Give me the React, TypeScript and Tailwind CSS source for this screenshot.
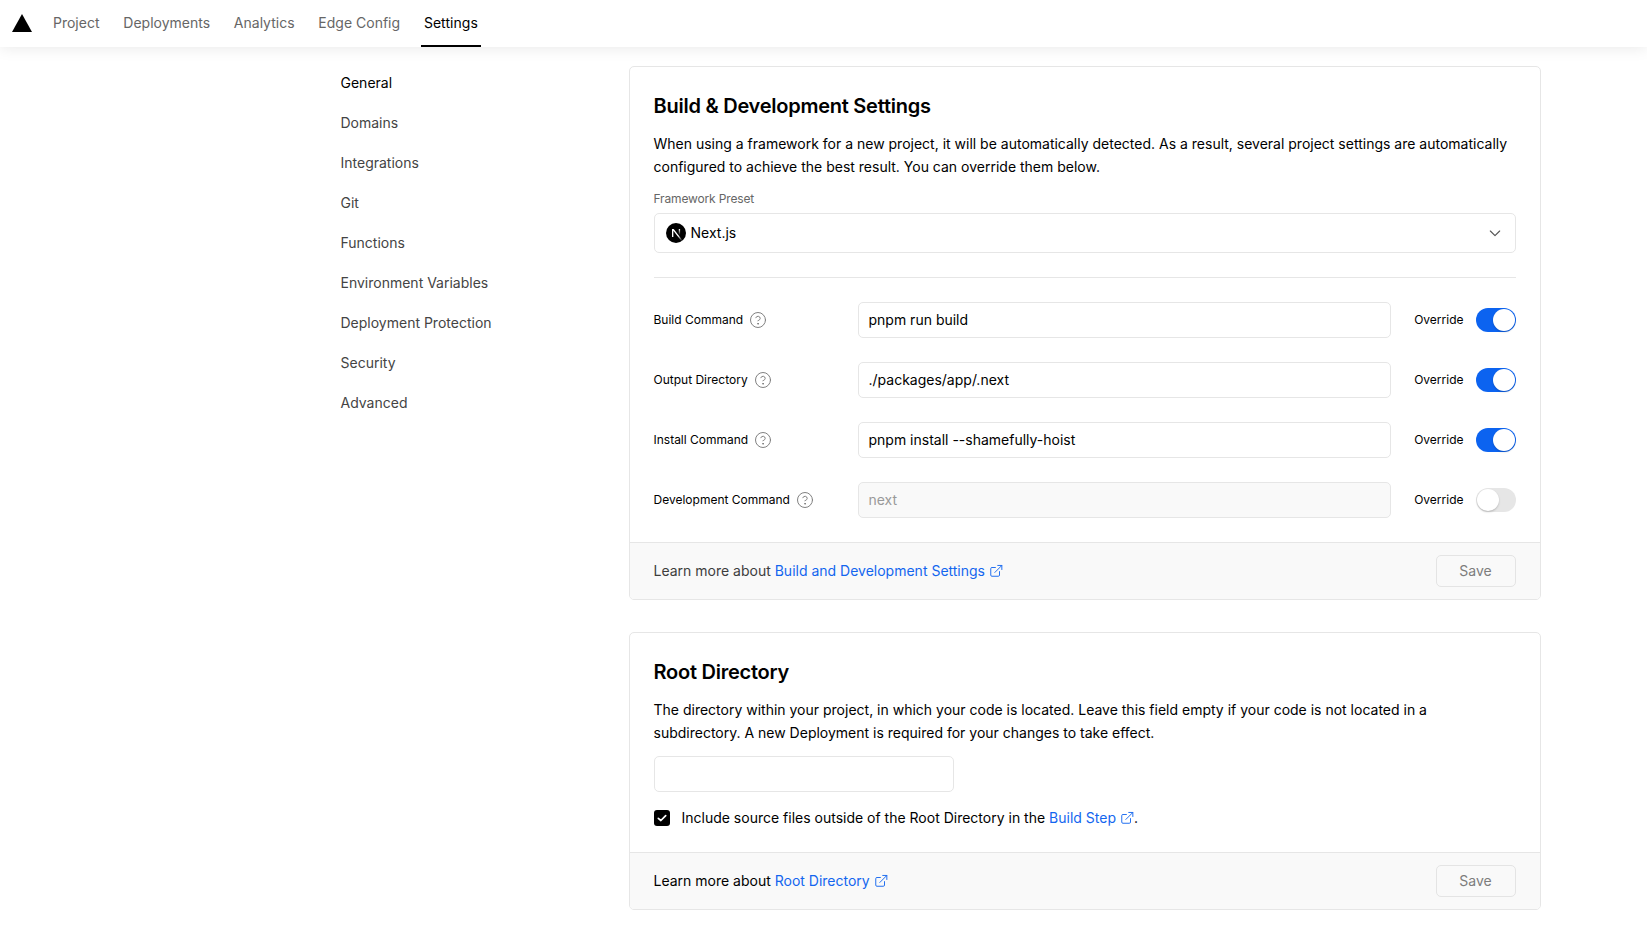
import type { ReactNode } from 'react';

const tabs = ['Project', 'Deployments', 'Analytics', 'Edge Config', 'Settings'];

const sections = [
  'General',
  'Domains',
  'Integrations',
  'Git',
  'Functions',
  'Environment Variables',
  'Deployment Protection',
  'Security',
  'Advanced',
];

const commands = [
  { label: 'Build Command', value: 'pnpm run build', on: true },
  { label: 'Output Directory', value: './packages/app/.next', on: true },
  { label: 'Install Command', value: 'pnpm install --shamefully-hoist', on: true },
  { label: 'Development Command', value: 'next', on: false },
];

function ExternalIcon() {
  return (
    <svg
      className="ml-1 inline-block h-[14px] w-[14px] align-[-2px]"
      viewBox="0 0 24 24"
      fill="none"
      stroke="currentColor"
      strokeWidth="1.6"
      strokeLinecap="round"
      strokeLinejoin="round"
    >
      <path d="M18 13v6a2 2 0 0 1-2 2H5a2 2 0 0 1-2-2V8a2 2 0 0 1 2-2h6" />
      <path d="M15 2.5h7v7" />
      <path d="M10 14.5L22 2.5" />
    </svg>
  );
}

function HelpIcon() {
  return (
    <svg
      className="h-[18px] w-[18px] text-[#7d7d7d]"
      viewBox="0 0 24 24"
      fill="none"
      stroke="currentColor"
      strokeWidth="1.3"
      strokeLinecap="round"
      strokeLinejoin="round"
    >
      <circle cx="12" cy="12" r="10" />
      <path d="M9.09 9a3 3 0 0 1 5.83 1c0 2-3 3-3 3" />
      <circle cx="12" cy="17" r="0.6" fill="currentColor" />
    </svg>
  );
}

function NextLogo() {
  return (
    <svg className="h-5 w-5" viewBox="0 0 180 180">
      <defs>
        <linearGradient id="diag" x1="109" y1="116.5" x2="144.5" y2="160.5" gradientUnits="userSpaceOnUse">
          <stop stopColor="#fff" />
          <stop offset="1" stopColor="#fff" stopOpacity="0" />
        </linearGradient>
        <linearGradient id="bar" x1="121" y1="54" x2="120.8" y2="106.9" gradientUnits="userSpaceOnUse">
          <stop stopColor="#fff" />
          <stop offset="1" stopColor="#fff" stopOpacity="0" />
        </linearGradient>
      </defs>
      <circle cx="90" cy="90" r="90" fill="#000" />
      <path
        fill="url(#diag)"
        d="M149.508 157.52L69.142 54H54v71.97h12.114V69.384l73.885 95.461a90.304 90.304 0 0 0 9.509-7.325z"
      />
      <rect x="115" y="54" width="12" height="72" fill="url(#bar)" />
    </svg>
  );
}

function Switch({ on }: { on: boolean }) {
  return (
    <span
      className={
        on
          ? 'flex h-6 w-10 shrink-0 items-center justify-end rounded-full bg-[#0c63f0] px-px'
          : 'flex h-6 w-10 shrink-0 items-center justify-start rounded-full bg-[#e6e6e6] px-px'
      }
    >
      <span className="h-[22px] w-[22px] rounded-full bg-white shadow-[0_1px_2px_rgba(0,0,0,0.2)]" />
    </span>
  );
}

function Link({ children }: { children: ReactNode }) {
  return (
    <a className="text-[#1366ef]">
      {children}
      <ExternalIcon />
    </a>
  );
}

function CardFooter({ children, muted }: { children: ReactNode; muted?: boolean }) {
  return (
    <footer className="flex h-[57px] items-center justify-between rounded-b-[4px] border-t border-[#e6e6e6] bg-[#f9f9f9] px-6">
      <p className={muted ? 'mb-px text-[#3d3d3d]' : 'mb-px text-black'}>{children}</p>
      <button className="h-8 w-20 rounded-[5px] border border-[#e4e4e4] pb-px text-[#7d7d7d]">Save</button>
    </footer>
  );
}

function Card({ title, children }: { title: string; children: ReactNode }) {
  return (
    <section className="rounded-[5px] border border-[#e6e6e6] bg-white">
      <h2 className="px-6 pt-6 text-[20px] leading-[30px] font-semibold tracking-[-0.25px]">{title}</h2>
      {children}
    </section>
  );
}

export default function App() {
  return (
    <div className="h-[928px] overflow-hidden bg-white font-['Inter',sans-serif] text-[14px] leading-[23px] text-black">
      <header className="relative flex h-[47px] items-stretch bg-white pl-3 shadow-[0_0_15px_rgba(0,0,0,0.1)]">
        <svg className="mt-[14px] h-[18px] w-5" viewBox="0 0 20 18">
          <path d="M10 0L20 18H0z" fill="#000" />
        </svg>
        <nav className="ml-[18px] flex gap-[17.8px]">
          {tabs.map((tab) => (
            <a
              key={tab}
              className={
                tab === 'Settings'
                  ? 'border-b-2 border-black px-[3px] pt-[11px] tracking-[0.05px] text-black'
                  : 'px-[3px] pt-[11px] text-[#666666]'
              }
            >
              {tab}
            </a>
          ))}
        </nav>
      </header>

      <main className="flex pt-[19px]">
        <aside className="ml-[340.5px] w-[288px] pt-[5px]">
          <ul>
            {sections.map((name) => (
              <li key={name} className={name === 'General' ? 'h-10 text-black' : 'h-10 text-[#444444]'}>
                {name}
              </li>
            ))}
          </ul>
        </aside>

        <div className="flex w-[912px] flex-col gap-8">
          <Card title="Build &amp; Development Settings">
            <div className="px-6 pb-6">
              <p className="mt-[11px]">
                When using a framework for a new project, it will be automatically detected. As a result, several
                project settings are automatically configured to achieve the best result. You can override them below.
              </p>
              <div className="mt-3 text-[12px] leading-[17px] tracking-[-0.15px] text-[#666666]">Framework Preset</div>
              <div className="mt-[6px] flex h-10 items-center rounded-[5px] border border-[#e6e6e6] px-[11px]">
                <NextLogo />
                <span className="mb-px ml-[5px]">Next.js</span>
                <svg
                  className="mr-px ml-auto h-4 w-4 text-[#555555]"
                  viewBox="0 0 24 24"
                  fill="none"
                  stroke="currentColor"
                  strokeWidth="1.7"
                  strokeLinecap="round"
                  strokeLinejoin="round"
                >
                  <path d="M5 9l7 7 7-7" />
                </svg>
              </div>
              <hr className="mt-6 border-[#e6e6e6]" />
              <div className="mt-6 flex flex-col gap-6">
                {commands.map((command) => (
                  <div key={command.label} className="flex h-9 items-center">
                    <div className="flex w-[204px] items-center gap-[6px] text-[12px]">
                      <span className="mb-px">{command.label}</span>
                      <HelpIcon />
                    </div>
                    <div
                      className={
                        command.on
                          ? 'flex h-9 w-[533px] items-center rounded-[5px] border border-[#e6e6e6] bg-white px-[10px] pb-px'
                          : 'flex h-9 w-[533px] items-center rounded-[5px] border border-[#e6e6e6] bg-[#f9f9f9] px-[10px] pb-px text-[#999999]'
                      }
                    >
                      {command.value}
                    </div>
                    <span className="mr-3 mb-px ml-auto text-[12px]">Override</span>
                    <Switch on={command.on} />
                  </div>
                ))}
              </div>
            </div>
            <CardFooter muted>
              Learn more about <Link>Build and Development Settings</Link>
            </CardFooter>
          </Card>

          <Card title="Root Directory">
            <div className="px-6 pb-[23px]">
              <p className="mt-[11px]">
                The directory within your project, in which your code is located. Leave this field empty if your code is
                not located in a subdirectory. A new Deployment is required for your changes to take effect.
              </p>
              <div className="mt-3 h-9 w-[300px] rounded-[5px] border border-[#e6e6e6]" />
              <div className="mt-[14px] flex items-center">
                <span className="flex h-4 w-4 items-center justify-center rounded-[3px] bg-black">
                  <svg className="h-4 w-4" viewBox="0 0 16 16" fill="none" stroke="#fff" strokeWidth="1.7">
                    <path d="M4.3 8.3L6.9 10.5L11.7 5.7" strokeLinecap="round" strokeLinejoin="round" />
                  </svg>
                </span>
                <span className="ml-3">
                  Include source files outside of the Root Directory in the <Link>Build Step</Link>.
                </span>
              </div>
            </div>
            <CardFooter>
              Learn more about <Link>Root Directory</Link>
            </CardFooter>
          </Card>
        </div>
      </main>
    </div>
  );
}
